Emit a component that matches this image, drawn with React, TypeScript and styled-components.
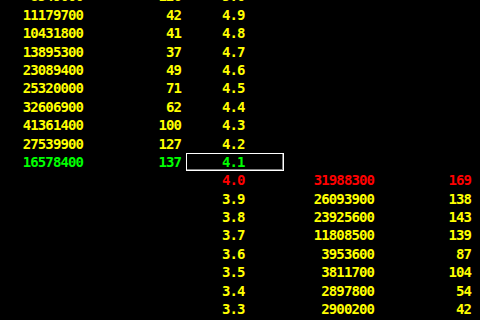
import React from "react";
import styled, { createGlobalStyle, css } from "styled-components";

// Type
type Tone = "normal" | "up" | "down";

interface Level {
  price: string;
  volume: string;
  count: string;
  tone?: Tone;
  selected?: boolean;
}

// Data
const upper: Level[] = [
  { price: "5.0", volume: "8549000", count: "126" },
  { price: "4.9", volume: "11179700", count: "42" },
  { price: "4.8", volume: "10431800", count: "41" },
  { price: "4.7", volume: "13895300", count: "37" },
  { price: "4.6", volume: "23089400", count: "49" },
  { price: "4.5", volume: "25320000", count: "71" },
  { price: "4.4", volume: "32606900", count: "62" },
  { price: "4.3", volume: "41361400", count: "100" },
  { price: "4.2", volume: "27539900", count: "127" },
  { price: "4.1", volume: "16578400", count: "137", tone: "up", selected: true },
];

const lower: Level[] = [
  { price: "4.0", volume: "31988300", count: "169", tone: "down" },
  { price: "3.9", volume: "26093900", count: "138" },
  { price: "3.8", volume: "23925600", count: "143" },
  { price: "3.7", volume: "11808500", count: "139" },
  { price: "3.6", volume: "3953600", count: "87" },
  { price: "3.5", volume: "3811700", count: "104" },
  { price: "3.4", volume: "2897800", count: "54" },
  { price: "3.3", volume: "2900200", count: "42" },
];

const ROW = 18.4;

function App() {
  return (
    <>
      <GlobalStyle />
      <Board>
        {upper.map((l) => (
          <Row key={l.price}>
            <Cell tone={l.tone}>{l.volume}</Cell>
            <Cell tone={l.tone}>{l.count}</Cell>
            <PriceCell tone={l.tone} selected={l.selected}>
              {l.price}
            </PriceCell>
            <Cell />
            <Cell />
          </Row>
        ))}
        {lower.map((l) => (
          <Row key={l.price}>
            <Cell />
            <Cell />
            <PriceCell tone={l.tone}>{l.price}</PriceCell>
            <Cell tone={l.tone}>{l.volume}</Cell>
            <Cell tone={l.tone}>{l.count}</Cell>
          </Row>
        ))}
      </Board>
    </>
  );
}

export default App;

const GlobalStyle = createGlobalStyle`
  html, body {
    margin: 0;
    padding: 0;
    width: 480px;
    height: 320px;
    overflow: hidden;
    background: #000;
  }
`;

const toneColor = (tone?: Tone) => {
  switch (tone) {
    case "up":
      return "#00ff00";
    case "down":
      return "#ff0000";
    default:
      return "#ffff00";
  }
};

const Board = styled.div`
  display: flex;
  flex-direction: column;
  margin-top: -12.6px;
  font-family: "DejaVu Sans Mono", "Liberation Mono", monospace;
  font-weight: bold;
  font-size: 14px;
  letter-spacing: -0.9px;
`;

const Row = styled.div`
  display: grid;
  grid-template-columns: 83px 98px 103px 90px 97px;
  height: ${ROW}px;
  line-height: ${ROW}px;
`;

const Cell = styled.div<{ tone?: Tone }>`
  text-align: right;
  white-space: nowrap;
  color: ${(p) => toneColor(p.tone)};
`;

const PriceCell = styled.div<{ tone?: Tone; selected?: boolean }>`
  margin-left: 5px;
  padding-left: 36px;
  box-sizing: border-box;
  height: ${ROW}px;
  color: ${(p) => toneColor(p.tone)};

  ${(p) =>
    p.selected &&
    css`
      border: 1px solid #ffffff;
      box-shadow: inset -1px -1px 0 #808080;
      padding-left: 35px;
      line-height: ${ROW - 2}px;
    `}
`;
